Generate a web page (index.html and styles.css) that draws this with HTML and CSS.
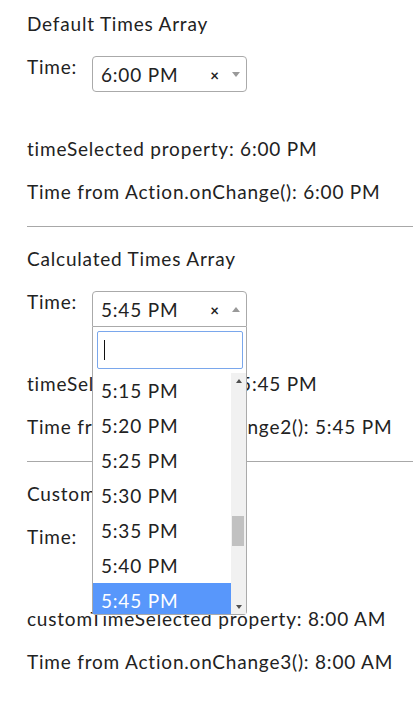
FILE: index.html
```html
<!DOCTYPE html>
<html>
<head>
<meta charset="utf-8">
<link rel="stylesheet" href="styles.css">
</head>
<body>
<div class="page">
  <section class="demo">
    <h2 class="title">Default Times Array</h2>
    <div class="field">
      <span class="label">Time:</span>
      <div class="select">
        <span class="value">6:00 PM</span>
        <span class="clear">×</span>
        <span class="arrow"></span>
      </div>
    </div>
    <p class="out first">timeSelected property: 6:00 PM</p>
    <p class="out">Time from Action.onChange(): 6:00 PM</p>
  </section>
  <hr class="rule">
  <section class="demo">
    <h2 class="title">Calculated Times Array</h2>
    <div class="field">
      <span class="label">Time:</span>
      <div class="select open">
        <span class="value">5:45 PM</span>
        <span class="clear">×</span>
        <span class="arrow up"></span>
        <div class="dropdown">
          <div class="search"><span class="caret"></span></div>
          <div class="results">
            <ul class="options">
              <li class="option">5:15 PM</li>
              <li class="option">5:20 PM</li>
              <li class="option">5:25 PM</li>
              <li class="option">5:30 PM</li>
              <li class="option">5:35 PM</li>
              <li class="option">5:40 PM</li>
              <li class="option active">5:45 PM</li>
            </ul>
            <div class="scrollbar">
              <div class="sb-btn"><span class="sb-up"></span></div>
              <div class="sb-track"><div class="sb-thumb"></div></div>
              <div class="sb-btn"><span class="sb-down"></span></div>
            </div>
          </div>
        </div>
      </div>
    </div>
    <p class="out first">timeSelected property: 5:45 PM</p>
    <p class="out">Time from Action.onChange2(): 5:45 PM</p>
  </section>
  <hr class="rule">
  <section class="demo">
    <h2 class="title">Custom Times Array</h2>
    <div class="field">
      <span class="label">Time:</span>
      <div class="select">
        <span class="value">8:00 AM</span>
        <span class="clear">×</span>
        <span class="arrow"></span>
      </div>
    </div>
    <p class="out first">customTimeSelected property: 8:00 AM</p>
    <p class="out">Time from Action.onChange3(): 8:00 AM</p>
  </section>
</div>
</body>
</html>
```
FILE: styles.css
```css
html, body {
  margin: 0;
  padding: 0;
  background: #fff;
}
body {
  overflow: hidden;
}
.page {
  padding: 11px 0 0 27px;
  font-family: Lato, "Open Sans", sans-serif;
  font-size: 19px;
  letter-spacing: 0.8px;
  color: #222;
}
.title {
  margin: 0;
  font-size: 19px;
  font-weight: normal;
  line-height: 26px;
}
.field {
  display: flex;
  align-items: flex-start;
  margin-top: 19px;
}
.label {
  width: 65px;
  line-height: 22px;
}
.select {
  position: relative;
  box-sizing: border-box;
  width: 155px;
  height: 36px;
  border: 1px solid #aaa;
  border-radius: 4px;
  display: flex;
  align-items: center;
  padding: 0 6px 0 8px;
  background: #fff;
}
.select.open {
  border-radius: 4px 4px 0 0;
}
.value {
  flex: 1;
}
.clear {
  font-size: 15px;
  font-weight: bold;
  letter-spacing: 0;
  color: #222;
  margin-right: 13px;
  margin-top: 2px;
}
.arrow {
  width: 0;
  height: 0;
  border-style: solid;
  border-width: 5px 4px 0 4px;
  border-color: #999 transparent transparent transparent;
}
.arrow.up {
  border-width: 0 4px 5px 4px;
  border-color: transparent transparent #999 transparent;
}
.out {
  margin: 17px 0 0;
  line-height: 26px;
}
.out.first {
  margin-top: 44px;
}
.rule {
  margin: 21px 0 19px;
  height: 0;
  border: 0;
  border-top: 1px solid #a8a8a8;
}
.dropdown {
  position: absolute;
  top: calc(100% + 1px);
  left: -1px;
  width: 155px;
  box-sizing: border-box;
  border: 1px solid #aaa;
  border-top: 0;
  border-radius: 0 0 4px 4px;
  background: #fff;
  z-index: 10;
}
.search {
  box-sizing: border-box;
  margin: 4px 3px 4px 4px;
  height: 38px;
  border: 1px solid #7aa7ec;
  border-radius: 2px;
  display: flex;
  align-items: center;
  padding-left: 6px;
}
.caret {
  width: 1px;
  height: 20px;
  background: #111;
}
.results {
  display: flex;
  height: 241px;
}
.options {
  flex: 1;
  margin: 0;
  padding: 0;
  list-style: none;
  overflow: hidden;
}
.option {
  height: 35px;
  line-height: 35px;
  padding-left: 8px;
}
.option.active {
  background: #5897fb;
  color: #fff;
}
.scrollbar {
  width: 15px;
  background: #f1f1f1;
  display: flex;
  flex-direction: column;
}
.sb-btn {
  height: 15px;
  display: flex;
  align-items: center;
  justify-content: center;
}
.sb-up, .sb-down {
  width: 0;
  height: 0;
  border-style: solid;
}
.sb-up {
  border-width: 0 3.5px 4px 3.5px;
  border-color: transparent transparent #505050 transparent;
}
.sb-down {
  border-width: 4px 3.5px 0 3.5px;
  border-color: #505050 transparent transparent transparent;
}
.sb-track {
  flex: 1;
}
.sb-thumb {
  margin: 128px 2px 0 1px;
  height: 30px;
  background: #c1c1c1;
}
```
